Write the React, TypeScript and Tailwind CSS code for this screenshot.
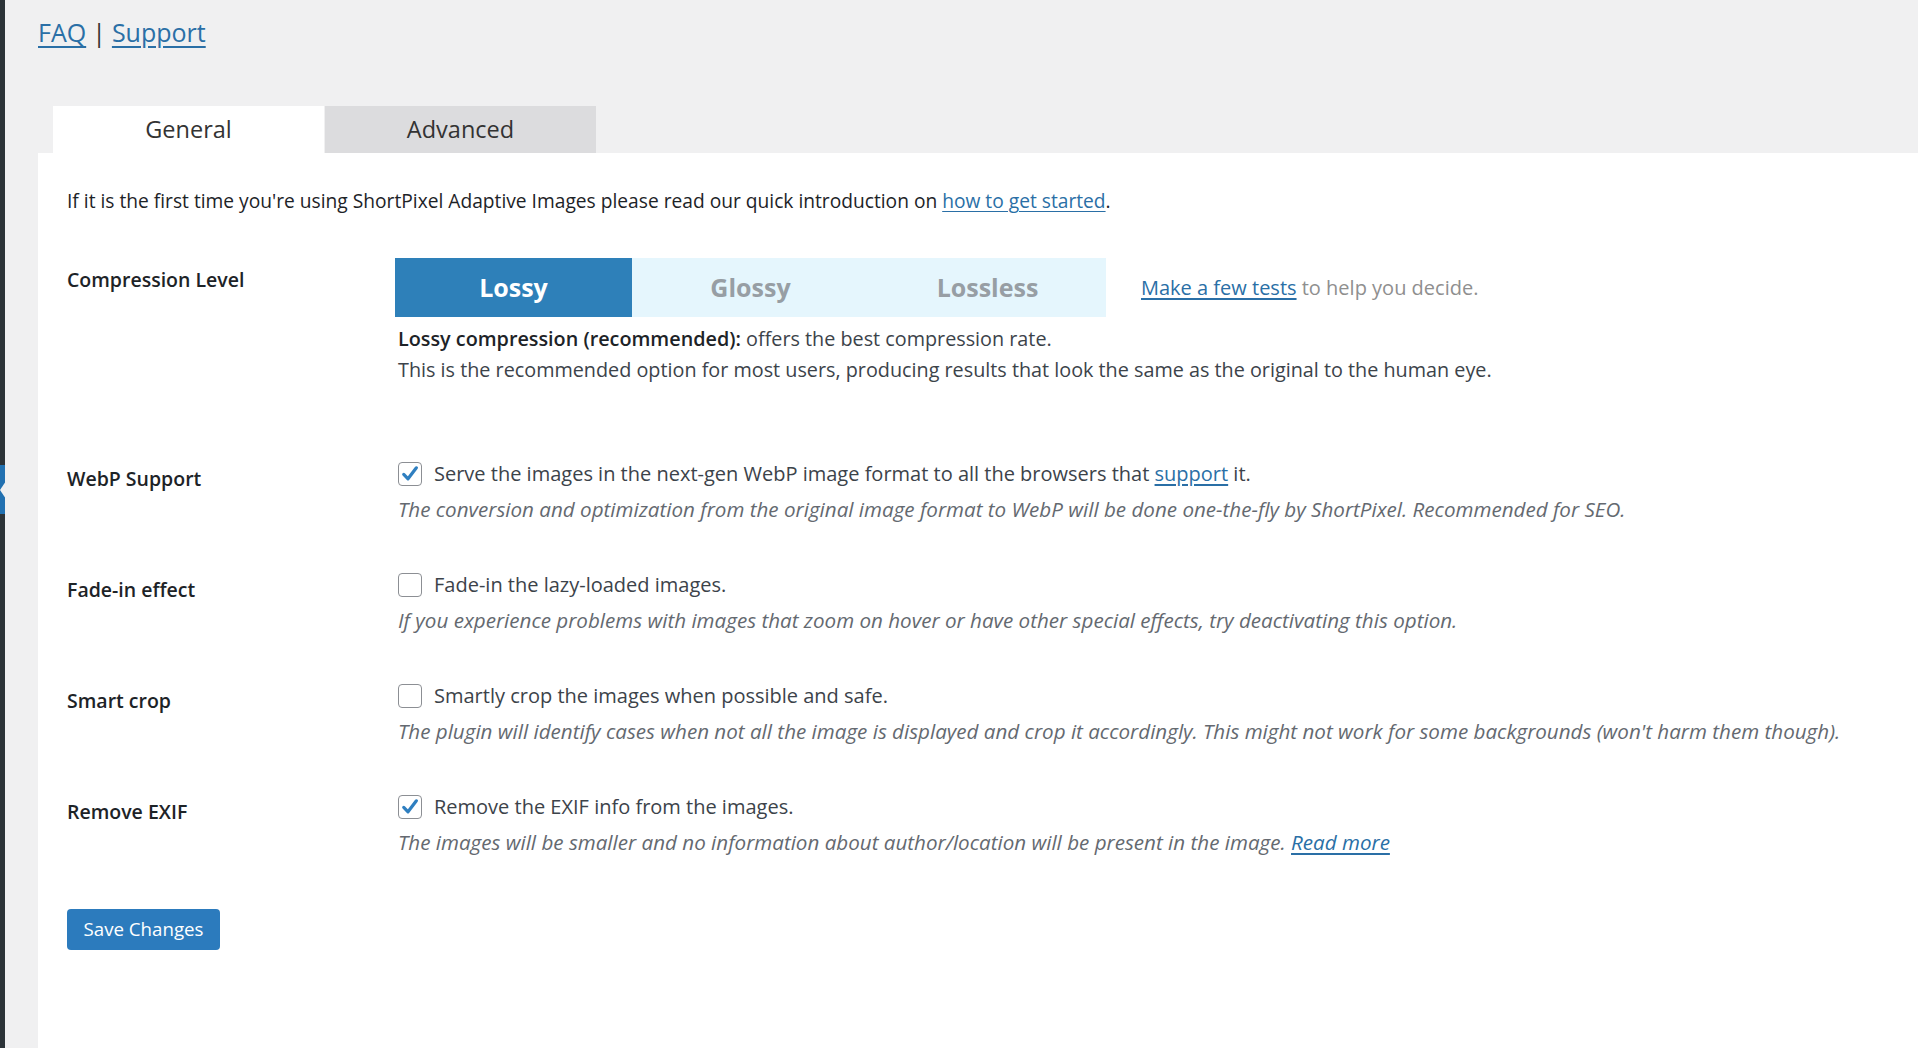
import React, { useState } from 'react';

const FONT = "font-['Open_Sans','Noto_Sans',sans-serif]";

interface OptionRow {
  id: string;
  label: string;
  text: React.ReactNode;
  hint: React.ReactNode;
  checked: boolean;
}

const Checkbox = ({ checked, onChange }: { checked: boolean; onChange: () => void }) => (
  <button
    type="button"
    onClick={onChange}
    className="flex h-[24px] w-[24px] shrink-0 items-center justify-center rounded-[4px] border border-[#8c8f94] bg-white"
  >
    {checked && (
      <svg viewBox="0 0 20 20" className="h-[22px] w-[22px]">
        <path d="M4.3 10.4 8.2 14.4 15.8 4.4" fill="none" stroke="#2f7fc0" strokeWidth="2.9" strokeLinecap="round" strokeLinejoin="round" />
      </svg>
    )}
  </button>
);

const Link = ({ children }: { children: React.ReactNode }) => (
  <a href="#" className="text-[#2a6fa6] underline underline-offset-[3px]">
    {children}
  </a>
);

export default function App() {
  const [tab, setTab] = useState<'general' | 'advanced'>('general');
  const [level, setLevel] = useState<'Lossy' | 'Glossy' | 'Lossless'>('Lossy');
  const [opts, setOpts] = useState<Record<string, boolean>>({
    webp: true,
    fade: false,
    crop: false,
    exif: true,
  });

  const toggle = (id: string) => setOpts((o) => ({ ...o, [id]: !o[id] }));

  const rows: OptionRow[] = [
    {
      id: 'webp',
      label: 'WebP Support',
      checked: opts.webp,
      text: (
        <>
          Serve the images in the next-gen WebP image format to all the browsers that <Link>support</Link> it.
        </>
      ),
      hint: 'The conversion and optimization from the original image format to WebP will be done one-the-fly by ShortPixel. Recommended for SEO.',
    },
    {
      id: 'fade',
      label: 'Fade-in effect',
      checked: opts.fade,
      text: 'Fade-in the lazy-loaded images.',
      hint: 'If you experience problems with images that zoom on hover or have other special effects, try deactivating this option.',
    },
    {
      id: 'crop',
      label: 'Smart crop',
      checked: opts.crop,
      text: 'Smartly crop the images when possible and safe.',
      hint: "The plugin will identify cases when not all the image is displayed and crop it accordingly. This might not work for some backgrounds (won't harm them though).",
    },
    {
      id: 'exif',
      label: 'Remove EXIF',
      checked: opts.exif,
      text: 'Remove the EXIF info from the images.',
      hint: (
        <>
          The images will be smaller and no information about author/location will be present in the image. <Link>Read more</Link>
        </>
      ),
    },
  ];

  return (
    <div className={`relative flex min-h-screen w-full bg-[#f0f0f1] ${FONT}`}>
      {/* admin menu edge */}
      <div className="w-[5px] shrink-0 bg-[#2c3338]" />
      <div className="absolute left-0 top-[465px] h-[49px] w-[5px] bg-[#2271b1]" />
      <div className="absolute left-0 top-[481px] h-0 w-0 border-y-[9px] border-r-[6px] border-y-transparent border-r-[#f0f0f1]" />

      <div className="flex min-w-0 flex-1 flex-col pl-[33px]">
        <div className="pt-[14px] text-[25px] leading-[36px] text-[#333]">
          <a href="#" className="text-[#2a6fa6] underline underline-offset-[4px]">FAQ</a>
          <span className="mx-[6px]">|</span>
          <a href="#" className="text-[#2a6fa6] underline underline-offset-[4px]">Support</a>
        </div>

        <div className="mt-[56px] flex pl-[15px]">
          <button
            onClick={() => setTab('general')}
            className={`h-[47px] w-[271px] text-[23.5px] text-[#333] ${tab === 'general' ? 'bg-white' : 'bg-[#dcdcde]'}`}
          >
            General
          </button>
          <button
            onClick={() => setTab('advanced')}
            className={`ml-[1px] h-[47px] w-[271px] text-[23.5px] text-[#333] ${tab === 'advanced' ? 'bg-white' : 'bg-[#dcdcde]'}`}
          >
            Advanced
          </button>
        </div>

        <div className="flex-1 bg-white pl-[29px] pt-[33px] text-[#1d2327]">
          <p className="text-[19.2px] leading-[30px]">
            If it is the first time you're using ShortPixel Adaptive Images please read our quick introduction on{' '}
            <Link>how to get started</Link>.
          </p>

          {/* compression level */}
          <div className="mt-[42px] flex">
            <div className="w-[328px] shrink-0 pt-[7px] text-[19.5px] font-semibold leading-[30px]">Compression Level</div>
            <div>
              <div className="flex items-center">
                <div className="flex h-[59px] bg-[#e5f6fd]">
                  {(['Lossy', 'Glossy', 'Lossless'] as const).map((l) => (
                    <button
                      key={l}
                      onClick={() => setLevel(l)}
                      className={`w-[237px] text-[25px] font-bold ${level === l ? 'bg-[#2e80b9] text-white' : 'text-[#979ea4]'}`}
                    >
                      {l}
                    </button>
                  ))}
                </div>
                <div className="ml-[35px] text-[20px] text-[#8f8f8f]">
                  <Link>Make a few tests</Link> to help you decide.
                </div>
              </div>
              <div className="mt-[6px] pl-[3px] text-[19.8px] leading-[31px] text-[#3c434a]">
                <p>
                  <span className="font-semibold text-[#1d2327]">Lossy compression (recommended):</span> offers the best compression rate.
                </p>
                <p>This is the recommended option for most users, producing results that look the same as the original to the human eye.</p>
              </div>
            </div>
          </div>

          {/* options */}
          <div className="mt-[74px] flex flex-col gap-[46px]">
            {rows.map((r) => (
              <div key={r.id} className="flex">
                <div className="w-[331px] shrink-0 pt-[5px] text-[19.5px] font-semibold leading-[30px]">{r.label}</div>
                <div className="min-w-0">
                  <div className="flex h-[30px] items-center gap-[12px] text-[20px] text-[#3c434a]">
                    <Checkbox checked={r.checked} onChange={() => toggle(r.id)} />
                    <span>{r.text}</span>
                  </div>
                  <p className="mt-[5px] text-[20.6px] italic leading-[30px] text-[#646970]">{r.hint}</p>
                </div>
              </div>
            ))}
          </div>

          <button className="mb-[60px] mt-[52px] h-[41px] w-[153px] rounded-[4px] bg-[#2c7bbd] text-[18.7px] text-white">
            Save Changes
          </button>
        </div>
      </div>
    </div>
  );
}
